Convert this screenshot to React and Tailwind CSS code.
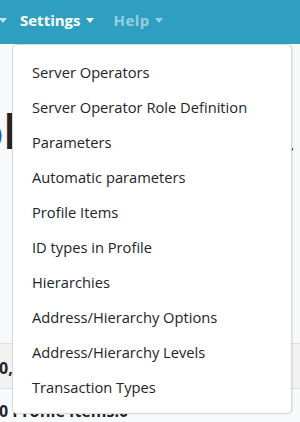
import React from 'react';

const items = [
  'Server Operators',
  'Server Operator Role Definition',
  'Parameters',
  'Automatic parameters',
  'Profile Items',
  'ID types in Profile',
  'Hierarchies',
  'Address/Hierarchy Options',
  'Address/Hierarchy Levels',
  'Transaction Types',
];

const Caret = () => (
  <span className="ml-[5px] inline-block h-0 w-0 border-x-[4.5px] border-t-[5px] border-x-transparent border-t-current" />
);

export default function App() {
  return (
    <div className="relative h-[422px] w-[300px] overflow-hidden bg-[#f8f9fb] font-['Open_Sans','Noto_Sans',sans-serif] text-[#212529]">
      {/* navbar */}
      <nav className="flex h-[44px] items-center bg-[#2e9fc0] pb-[3px] text-[15px] font-bold">
        <span className="-ml-[6px] flex items-center text-white/70">
          <Caret />
        </span>
        <span className="ml-[13px] flex items-center text-white">
          Settings
          <Caret />
        </span>
        <span className="ml-[20px] flex items-center tracking-[0.4px] text-white/50">
          Help
          <Caret />
        </span>
      </nav>

      {/* page content under the menu */}
      <div className="flex h-[120px] items-end justify-between pb-[10px]">
        <span className="-ml-[25px] text-[46px] font-bold leading-none">
          <span className="text-[#2a5d9c]">o</span>l
        </span>
        <span className="mr-[6px] text-[20px] font-bold leading-none">.</span>
      </div>
      <div className="mt-[179px] flex h-[46px] items-center border-y border-[#dee2e6] bg-[#f2f2f2] pt-[3px] text-[16px] font-bold">
        <span className="-ml-[1px]">0,</span>
      </div>
      <div className="mt-[10px] text-[16px] font-bold leading-[24px]">
        <span className="-ml-[1px]">0 Profile Items:0</span>
      </div>

      {/* dropdown */}
      <div className="absolute left-[12px] top-[44px] w-[280px] rounded-[5px] border border-[#d5d8dc] bg-white pb-[8px] pt-[10px] shadow-[1px_0_2px_rgba(0,0,0,0.08)]">
        {items.map((it) => (
          <div key={it} className="flex h-[35px] items-center whitespace-nowrap px-[19px] text-[14.7px] text-[#212529]">
            {it}
          </div>
        ))}
      </div>
    </div>
  );
}
